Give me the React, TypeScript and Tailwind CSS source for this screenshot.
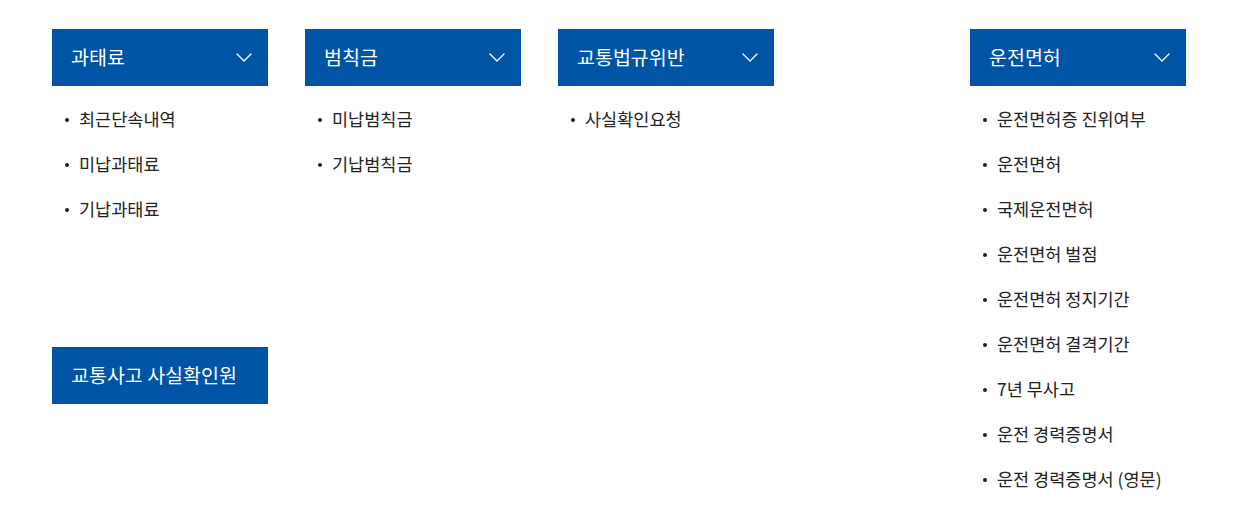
import React from 'react'

const FONT = { fontFamily: '"Noto Sans CJK KR", "Noto Sans", sans-serif' }

interface MenuProps {
  title: string
  items: string[]
  className?: string
}

function Chevron() {
  return (
    <svg width="16" height="9" viewBox="0 0 16 9" fill="none" className="shrink-0">
      <path d="M1 1l7 7 7-7" stroke="white" strokeWidth="1.3" strokeLinecap="round" strokeLinejoin="round" />
    </svg>
  )
}

function MenuColumn({ title, items, className }: MenuProps) {
  return (
    <div className={className}>
      <div className="h-[57px] bg-[#0054a6] flex items-center justify-between pl-[19px] pr-[16px]">
        <span className="text-[19.5px] font-normal text-white pb-[2px]">{title}</span>
        <Chevron />
      </div>
      <ul className="pt-[11px]">
        {items.map((item) => (
          <li key={item} className="h-[45px] flex items-center pl-[13px] text-[17.5px] text-[#222]">
            <span className="w-[4px] h-[4px] rounded-full bg-[#222] mr-[10px]" />
            {item}
          </li>
        ))}
      </ul>
    </div>
  )
}

export default function App() {
  return (
    <div style={FONT} className="w-[1233px] h-[514px] bg-white pt-[29px] pl-[52px] pr-[47px] flex">
      <div className="w-[216px] flex flex-col">
        <MenuColumn title="과태료" items={['최근단속내역', '미납과태료', '기납과태료']} />
        <div className="mt-[115px] h-[57px] bg-[#0054a6] flex items-center pl-[19px]">
          <span className="text-[19.5px] font-normal text-white pb-[2px]">교통사고 사실확인원</span>
        </div>
      </div>
      <MenuColumn className="w-[216px] ml-[37px]" title="범칙금" items={['미납범칙금', '기납범칙금']} />
      <MenuColumn className="w-[216px] ml-[37px]" title="교통법규위반" items={['사실확인요청']} />
      <MenuColumn
        className="w-[216px] ml-auto"
        title="운전면허"
        items={[
          '운전면허증 진위여부',
          '운전면허',
          '국제운전면허',
          '운전면허 벌점',
          '운전면허 정지기간',
          '운전면허 결격기간',
          '7년 무사고',
          '운전 경력증명서',
          '운전 경력증명서 (영문)',
        ]}
      />
    </div>
  )
}
